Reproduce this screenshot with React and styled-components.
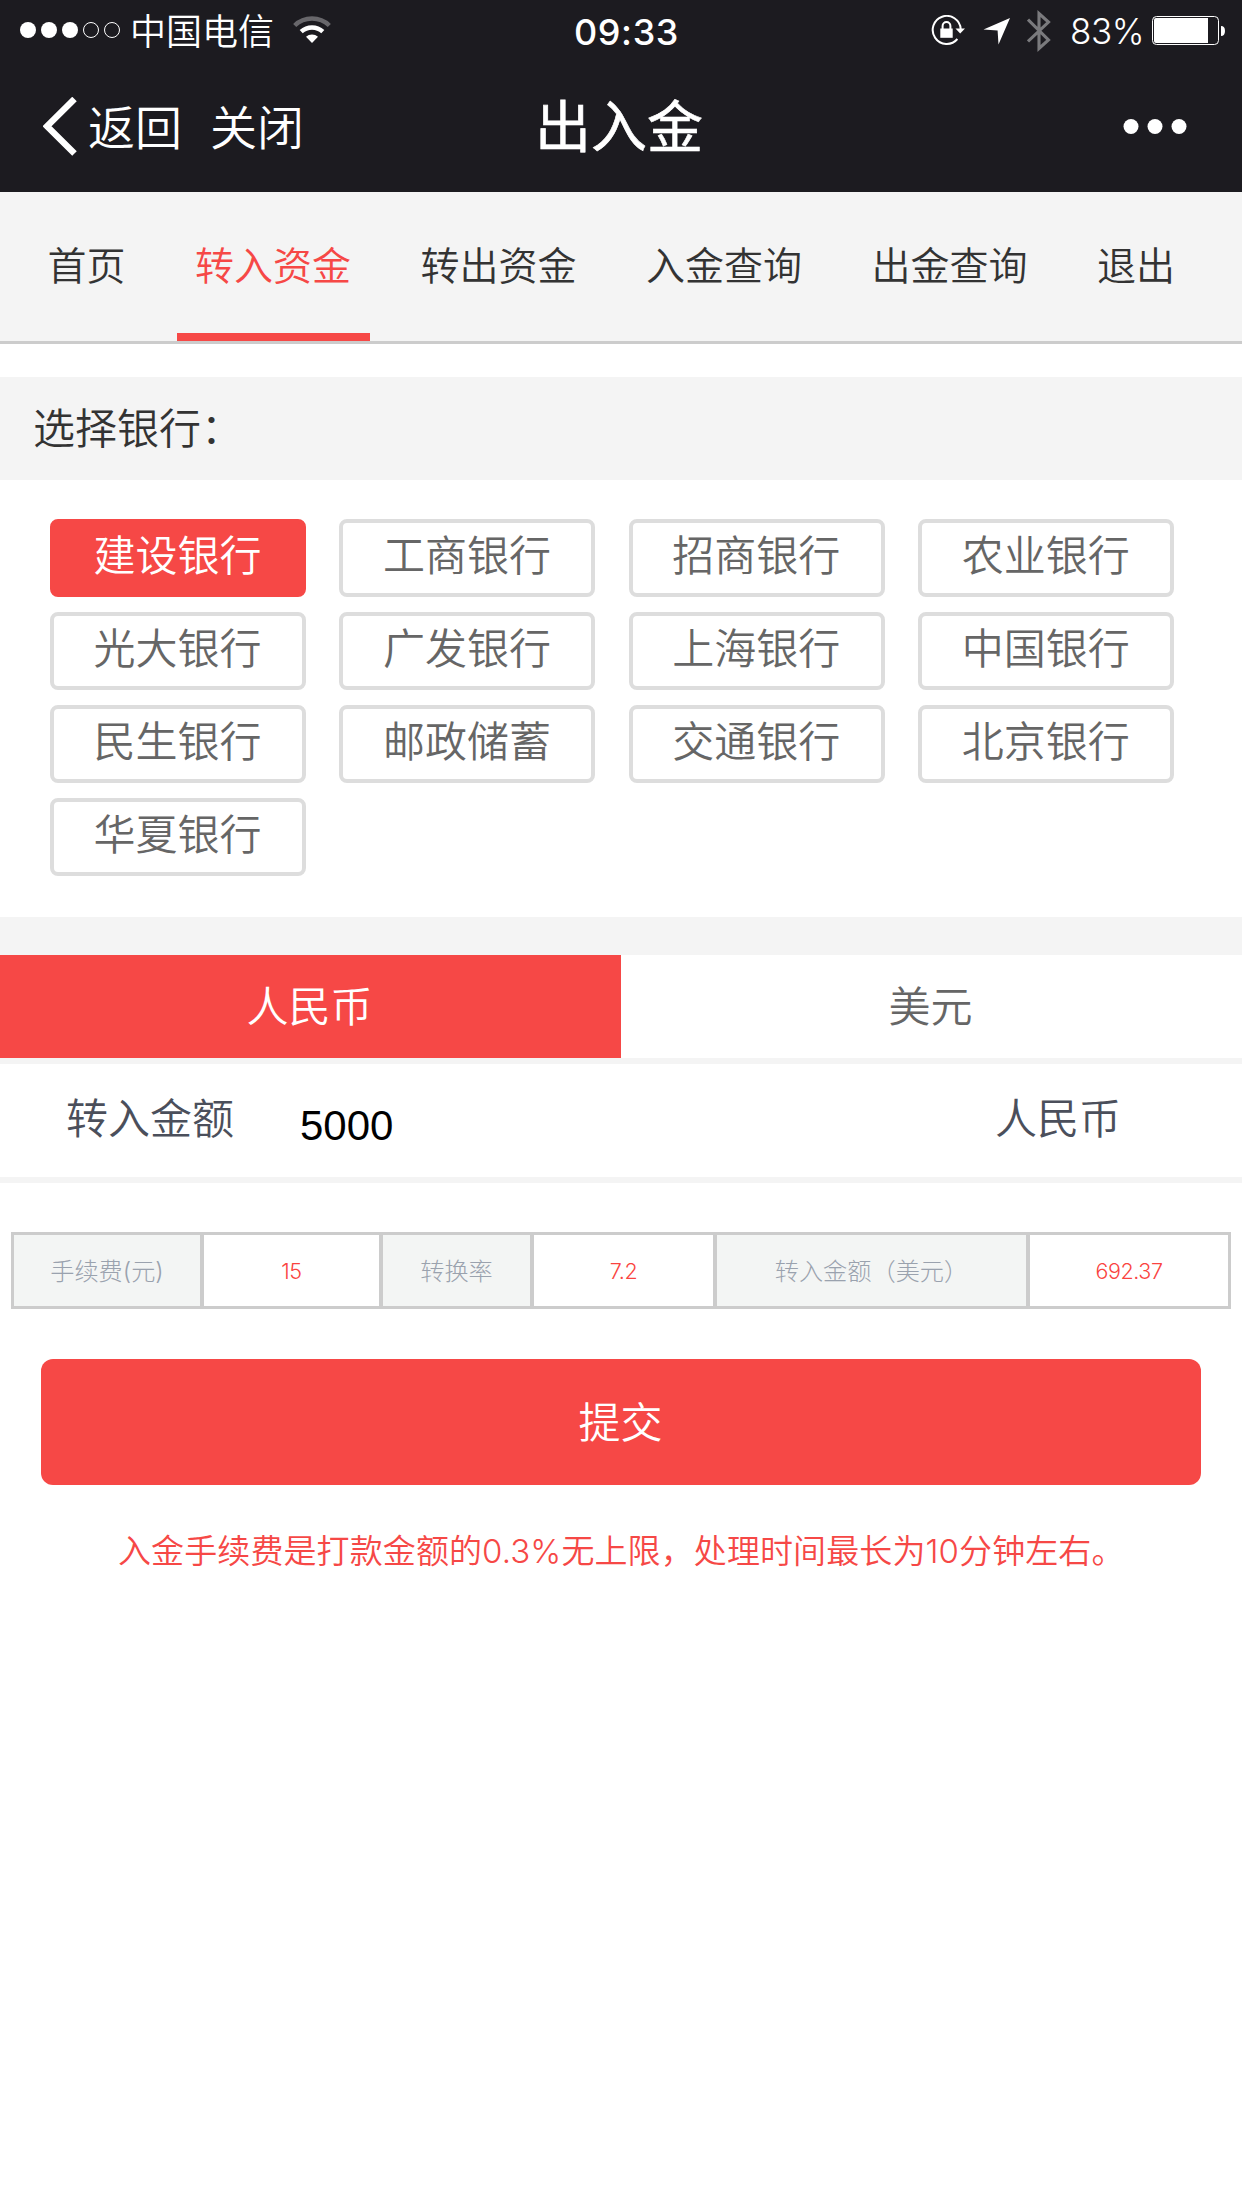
import React, { useState } from 'react'
import styled, { createGlobalStyle } from 'styled-components'

const GlobalStyle = createGlobalStyle`
    * {
        box-sizing: border-box;
    }
    body {
        margin: 0;
        background-color: #ffffff;
        font-family: Inter, "Noto Sans CJK SC DemiLight", "Noto Sans CJK SC", sans-serif;
        font-size: 42px;
        font-weight: 350;
        line-height: 1;
    }
    button {
        font: inherit;
        margin: 0;
        padding: 0;
        border: none;
        background: none;
    }
    svg {
        display: block;
        flex: none;
    }`

    const Page = styled.main`
    width: 1242px;
    min-height: 2208px;
    background-color: #ffffff;
    `

    const Header = styled.header`
    height: 192px;
    background-color: #1c1b20;
    color: #ffffff;
    `

    const StatusBar = styled.div`
    display: grid;
    grid-template-columns: 1fr auto 1fr;
    align-items: center;
    height: 62px;
    padding: 0 17px 0 20px;
    font-size: 36px;
    `

    const StatusLeft = styled.div`
    display: flex;
    align-items: center;
    `

    const StatusRight = styled.div`
    display: flex;
    align-items: center;
    justify-content: flex-end;
    `

    const Carrier = styled.span`
    margin: 0 19px 0 9px;
    padding-top: 1px;
    `

    const Clock = styled.span`
    font-weight: 500;
    font-size: 36px;
    letter-spacing: 0.6px;
    padding: 1px 0 0 8px;
    `

    const StatusIcons = styled.div`
    display: flex;
    align-items: center;
    gap: 16px;
    `

    const BatteryLevel = styled.span`
    font-weight: 350;
    font-size: 35px;
    letter-spacing: -0.5px;
    margin: 0 8px 0 19px;
    padding-top: 1px;
    `

    const TitleBar = styled.div`
    display: grid;
    grid-template-columns: 1fr auto 1fr;
    align-items: center;
    height: 130px;
    padding: 0 55px 0 43px;
    `

    const TitleActions = styled.div`
    display: flex;
    align-items: center;
    `

    const HeaderButton = styled.button`
    display: flex;
    align-items: center;
    color: #ffffff;
    font-size: 47px;
    margin-right: 28px;

    svg {
        margin-right: 9px;
    }
    `

    const Title = styled.h1`
    margin: 0;
    padding-left: 8px;
    font-family: Inter, "Noto Sans CJK SC", sans-serif;
    font-size: 56px;
    font-weight: 400;
    -webkit-text-stroke: 0.6px #ffffff;
    `

    const MoreButton = styled.button`
    justify-self: end;
    `

    const Nav = styled.nav`
    display: flex;
    gap: 32.5px;
    height: 152px;
    padding-left: 29px;
    background-color: #f4f4f4;
    border-bottom: 3px solid #cccccc;
    `

    const NavItem = styled.a`
    padding: 0 18.5px;
    font-size: 39px;
    line-height: 147px;
    height: 149px;
    color: ${props => props.$active ? '#f64846' : '#333333'};
    border-bottom: 8px solid ${props => props.$active ? '#f64846' : 'transparent'};
    `

    const SectionTitle = styled.h2`
    margin: 33px 0 0;
    padding-left: 33px;
    height: 103px;
    line-height: 103px;
    font-size: 42px;
    font-weight: 350;
    color: #333333;
    background-color: #f4f4f4;
    `

    const BankGrid = styled.section`
    display: grid;
    grid-template-columns: repeat(4, 256px);
    grid-auto-rows: 78px;
    gap: 15px 33.4px;
    padding: 39px 50px 41px;
    `

    const BankButton = styled.button`
    padding: 0 1px 5px 0;
    font-size: 42px;
    color: ${props => props.$active ? '#ffffff' : '#666666'};
    background-color: ${props => props.$active ? '#f64846' : '#ffffff'};
    border: 4px solid ${props => props.$active ? '#f64846' : '#dddddd'};
    border-radius: 8px;
    `

    const CurrencyTabs = styled.div`
    display: flex;
    border-top: 38px solid #f4f4f4;
    border-bottom: 6px solid #f4f4f4;
    `

    const CurrencyTab = styled.button`
    flex: 1;
    height: 103px;
    padding-right: 2px;
    font-size: 42px;
    color: ${props => props.$active ? '#ffffff' : '#666666'};
    background-color: ${props => props.$active ? '#f64846' : '#ffffff'};
    `

    const AmountRow = styled.div`
    display: flex;
    align-items: center;
    height: 119px;
    padding: 0 121px 4px 66px;
    color: #4b4f5b;
    border-bottom: 6px solid #f4f4f4;
    `

    const Amount = styled.span`
    flex: 1;
    padding: 14px 0 0 66px;
    font-family: "Liberation Sans", Arial, sans-serif;
    font-weight: 400;
    color: #000000;
    `

    const FeeTable = styled.table`
    width: 1220px;
    margin: 49px 11px 50px;
    table-layout: fixed;
    border-collapse: separate;
    border-spacing: 0;
    border: 3px solid #cccccc;
    `

    const FeeCell = styled.td`
    width: ${props => props.$width}px;
    height: 71px;
    padding: 3px 0 0;
    text-align: center;
    font-family: Inter, "Noto Sans CJK SC Light", "Noto Sans CJK SC", sans-serif;
    font-size: ${props => props.$label ? 24.2 : 21.5}px;
    font-weight: 300;
    letter-spacing: ${props => props.$label ? 0 : -0.4}px;
    color: ${props => props.$label ? '#9aa2ae' : '#fa4340'};
    background-color: ${props => props.$label ? '#f3f5f4' : '#ffffff'};

    & + & {
        border-left: 4px solid #cccccc;
    }
    `

    const SubmitButton = styled.button`
    display: block;
    width: 1160px;
    height: 126px;
    margin: 0 41px;
    padding: 1px 1px 0 0;
    color: #ffffff;
    background-color: #f64846;
    border-radius: 12px;
    `

    const Notice = styled.p`
    margin: 50px 0 0;
    padding-left: 118px;
    font-size: 33px;
    letter-spacing: 0.1px;
    color: #f64846;
    white-space: nowrap;
    `

const SignalIcon = () => (
    <svg width="101" height="18" viewBox="0 0 101 18">
        {[8, 29, 50].map(x => <circle key={x} cx={x} cy="8" r="8" fill="#fff" />)}
        {[71, 92].map(x => <circle key={x} cx={x} cy="8" r="7.5" fill="none" stroke="#fff" />)}
    </svg>
)

const WifiIcon = () => (
    <svg width="38" height="30" viewBox="0 0 38 30" fill="none">
        <path d="M1.7 9.5 A25 25 0 0 1 36.3 9.5" stroke="#68676b" strokeWidth="4.5" />
        <path d="M8.2 15.6 A16 16 0 0 1 29.8 15.6" stroke="#fff" strokeWidth="4.5" />
        <path d="M19 27 L13 20.8 A9 9 0 0 1 25 20.8 Z" fill="#fff" />
    </svg>
)

const RotationLockIcon = () => (
    <svg width="36" height="32" viewBox="0 0 36 32" fill="none">
        <path d="M26.4 24 A14 14 0 1 1 29.7 14" stroke="#fff" strokeWidth="2" />
        <path d="M24.5 13.5 H34 L29.2 18.5 Z" fill="#fff" />
        <rect x="9.3" y="13.5" width="12.4" height="9.3" fill="#fff" />
        <path d="M11.6 14.5 V11 A3.9 3.9 0 0 1 19.4 11 V14.5" stroke="#fff" strokeWidth="2" />
    </svg>
)

const LocationIcon = () => (
    <svg width="28" height="28" viewBox="0 0 28 28">
        <path d="M27 1 L15.5 27.5 L14.6 13.6 L0.5 12.6 Z" fill="#fff" />
    </svg>
)

const BluetoothIcon = () => (
    <svg width="24" height="42" viewBox="0 0 24 42" fill="none">
        <path d="M1 9.5 L21.5 30 L12 38.5 V3.5 L21.5 12 L1 31.5" stroke="#7a7a7d" strokeWidth="3.1" />
    </svg>
)

const BatteryIcon = () => (
    <svg width="73" height="30" viewBox="0 0 73 30">
        <rect x="0.5" y="0.5" width="66" height="28" rx="4" fill="none" stroke="#fff" />
        <path d="M4 2 H56 V27 H4 Q2 27 2 25 V4 Q2 2 4 2 Z" fill="#fff" />
        <path d="M69 10 Q73 10 73 15 Q73 20 69 20 Z" fill="#fff" />
    </svg>
)

const BackIcon = () => (
    <svg width="36" height="60" viewBox="0 0 36 60" fill="none">
        <path d="M31.5 2 L4 29.3 L31.5 56.6" stroke="#fff" strokeWidth="6.4" />
    </svg>
)

const MoreIcon = () => (
    <svg width="64" height="16" viewBox="0 0 64 16" fill="#fff">
        <circle cx="8" cy="7.5" r="7.5" />
        <circle cx="32" cy="7.5" r="7.5" />
        <circle cx="56" cy="7.5" r="7.5" />
    </svg>
)

const navItems = ['首页', '转入资金', '转出资金', '入金查询', '出金查询', '退出']

const banks = [
    '建设银行', '工商银行', '招商银行', '农业银行',
    '光大银行', '广发银行', '上海银行', '中国银行',
    '民生银行', '邮政储蓄', '交通银行', '北京银行',
    '华夏银行',
]

const App = () => {
    const [bank, setBank] = useState('建设银行')
    const [currency, setCurrency] = useState('人民币')

    return(
        <>
        <GlobalStyle />
        <Page lang="zh-CN">
            <Header>
                <StatusBar>
                    <StatusLeft>
                        <SignalIcon />
                        <Carrier>中国电信</Carrier>
                        <WifiIcon />
                    </StatusLeft>
                    <Clock>09:33</Clock>
                    <StatusRight>
                        <StatusIcons>
                            <RotationLockIcon />
                            <LocationIcon />
                            <BluetoothIcon />
                        </StatusIcons>
                        <BatteryLevel>83%</BatteryLevel>
                        <BatteryIcon />
                    </StatusRight>
                </StatusBar>
                <TitleBar>
                    <TitleActions>
                        <HeaderButton><BackIcon />返回</HeaderButton>
                        <HeaderButton>关闭</HeaderButton>
                    </TitleActions>
                    <Title>出入金</Title>
                    <MoreButton aria-label="更多"><MoreIcon /></MoreButton>
                </TitleBar>
            </Header>

            <Nav>
                {navItems.map(item => (
                    <NavItem key={item} $active={item === '转入资金'}>{item}</NavItem>
                ))}
            </Nav>

            <SectionTitle>选择银行：</SectionTitle>
            <BankGrid>
                {banks.map(name => (
                    <BankButton key={name} $active={name === bank} onClick={() => setBank(name)}>{name}</BankButton>
                ))}
            </BankGrid>

            <CurrencyTabs>
                {['人民币', '美元'].map(name => (
                    <CurrencyTab key={name} $active={name === currency} onClick={() => setCurrency(name)}>{name}</CurrencyTab>
                ))}
            </CurrencyTabs>
            <AmountRow>
                <span>转入金额</span>
                <Amount>5000</Amount>
                <span>{currency}</span>
            </AmountRow>

            <FeeTable>
                <tbody>
                    <tr>
                        <FeeCell $label $width={186}>手续费(元)</FeeCell>
                        <FeeCell $width={179}>15</FeeCell>
                        <FeeCell $label $width={151}>转换率</FeeCell>
                        <FeeCell $width={183}>7.2</FeeCell>
                        <FeeCell $label $width={313}>转入金额（美元）</FeeCell>
                        <FeeCell $width={202}>692.37</FeeCell>
                    </tr>
                </tbody>
            </FeeTable>

            <SubmitButton>提交</SubmitButton>
            <Notice>入金手续费是打款金额的0.3%无上限，处理时间最长为10分钟左右。</Notice>
        </Page>
    </>)
    }

export default App
